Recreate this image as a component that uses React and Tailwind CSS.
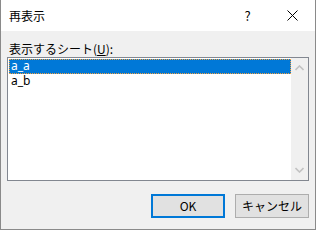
import React from 'react'

const font = { fontFamily: '"Noto Sans CJK JP", "Noto Sans", sans-serif' }
const listFont = { fontFamily: '"Noto Sans", "Liberation Sans", sans-serif' }

const Chevron = ({ up }) => (
    <svg width="9" height="6" viewBox="0 0 9 6" className="block">
        <path d={up ? 'M0.5 5 L4.5 1 L8.5 5' : 'M0.5 1 L4.5 5 L8.5 1'} fill="none" stroke="#c2c2c2" strokeWidth="1.6" />
    </svg>
)

export default function App() {
    return (
        <div className="w-[316px] h-[230px] bg-[#f0f0f0] border-l border-r border-b border-[#8a8a8a] flex flex-col text-black text-[12px]" style={font}>
            <div className="h-[31px] bg-white flex items-center shrink-0">
                <span className="pl-[8px] flex-1 text-[12px] leading-none">再表示</span>
                <span className="w-[45px] text-center text-[13px] leading-none">?</span>
                <span className="w-[45px] flex justify-center">
                    <svg width="11" height="11" viewBox="0 0 11 11">
                        <path d="M0.5 0.5 L10.5 10.5 M10.5 0.5 L0.5 10.5" stroke="#000" strokeWidth="1" />
                    </svg>
                </span>
            </div>
            <div className="flex flex-col px-[6px]">
                <div className="mt-[9px] h-[17px] leading-[17px] pl-[2px]">
                    表示するシート(<span className="underline">U</span>):
                </div>
                <div className="h-[124px] border border-[#828790] bg-white flex">
                    <div className="flex-1 pt-[1px] pl-[1px] text-[12px] leading-[12px]" style={listFont}>
                        <div className="h-[15px] bg-[#0078d7] text-white pl-[2px] pt-[1px] outline-1 outline-dotted outline-[#f0a040] -outline-offset-1">a_a</div>
                        <div className="h-[15px] pl-[2px] pt-[1px]">a_b</div>
                    </div>
                    <div className="w-[17px] bg-[#f0f0f0] flex flex-col justify-between items-center py-[7px]">
                        <Chevron up />
                        <Chevron />
                    </div>
                </div>
                <div className="flex justify-end gap-[10px] mt-[13px]">
                    <button className="w-[74px] h-[24px] bg-[#e1e1e1] border-2 border-[#0078d7] text-[12px] leading-none">OK</button>
                    <button className="w-[74px] h-[24px] bg-[#e1e1e1] border border-[#adadad] text-[12px] leading-none">キャンセル</button>
                </div>
            </div>
        </div>
    )
}
